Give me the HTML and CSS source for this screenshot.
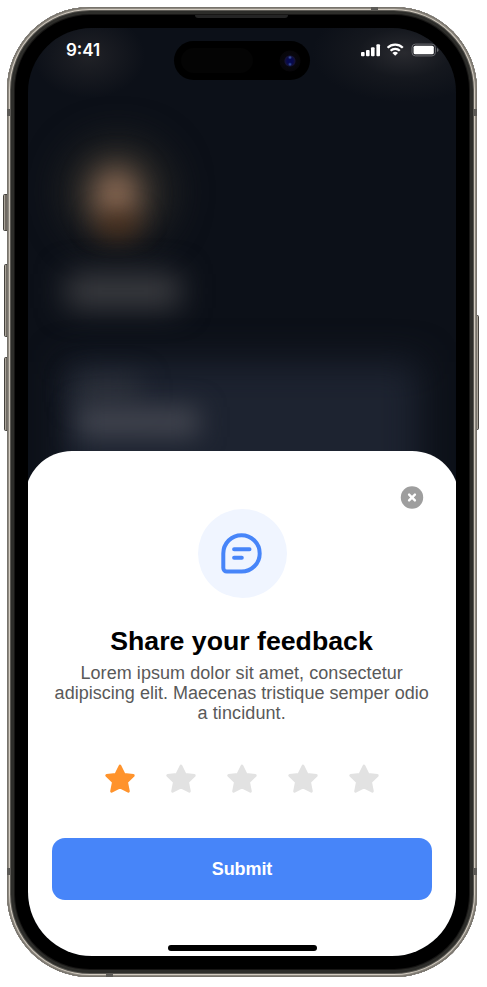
FILE: index.html
```html
<!DOCTYPE html>
<html lang="en">
<head>
<meta charset="utf-8">
<title>Share your feedback</title>
<link rel="stylesheet" href="styles.css">
</head>
<body>
<div class="phone">
  <i class="key key-action"></i><i class="key key-up"></i><i class="key key-down"></i><i class="key key-power"></i>
  <div class="frame">
    <i class="band band-tl"></i><i class="band band-tr"></i><i class="band band-bl"></i><i class="band band-br"></i><i class="band-h band-top"></i><i class="band-h band-bottom"></i>
    <i class="speaker"></i>
    <div class="screen">
      <div class="backdrop">
        <i class="glow glow-time"></i><i class="glow glow-icons"></i><i class="blur halo"></i><i class="blur face"></i><i class="blur chin"></i><i class="blur name"></i>
        <i class="blur card"></i><i class="blur label"></i><i class="blur amount"></i>
      </div>
      <header class="status">
        <span class="time">9:41</span>
        <div class="island"><i class="sensor"></i><i class="camera"></i></div>
        <svg class="indicators" width="80" height="14" viewBox="0 0 80 14">
          <g fill="#fff">
            <rect x="1" y="9" width="3.6" height="4.2" rx="1"/>
            <rect x="6" y="7" width="3.6" height="6.2" rx="1"/>
            <rect x="11" y="4.2" width="3.6" height="9" rx="1"/>
            <rect x="16.4" y="1.3" width="3.6" height="11.9" rx="1"/>
          </g>
          <g fill="none" stroke="#fff" stroke-width="2.3">
            <path d="M27.6 4.7a10.8 10.8 0 0 1 15.2 0"/>
            <path d="M30.6 7.7a6.6 6.6 0 0 1 9.2 0"/>
          </g>
          <path d="M32.4 9.9a4.2 4.2 0 0 1 5.6 0l-2.8 2.8z" fill="#fff"/>
          <rect x="52" y="1.1" width="23.4" height="11.8" rx="3.4" fill="none" stroke="#6b6c71"/>
          <rect x="53.6" y="2.7" width="20.2" height="8.6" rx="1.6" fill="#fff"/>
          <path d="M77 5v4q1.6-.6 1.600-2t-1.600-2z" fill="#6b6c71"/>
        </svg>
      </header>
      <main class="sheet">
        <div class="sheet-top">
          <svg class="close" width="24" height="24" viewBox="0 0 24 24"><circle cx="12" cy="11.500" r="11.200" fill="#9e9e9e"/><path d="M9.100 8.600l5.800 5.800M14.900 8.600l-5.800 5.800" stroke="#fff" stroke-width="2.400" stroke-linecap="round"/></svg>
        </div>
        <div class="badge">
          <svg width="44" height="44" viewBox="0 0 44 44" fill="none" stroke="#4785f9" stroke-width="4" stroke-linecap="round" stroke-linejoin="round"><path d="M21.500 3.200a18.200 18.200 0 0 1 0 36.400H6.900a3.600 3.600 0 0 1-3.600-3.600V21.400A18.200 18.200 0 0 1 21.500 3.200z"/><path d="M14.100 17.200h15.400M14.100 25.700h7.700"/></svg>
        </div>
        <h1>Share your feedback</h1>
        <p class="copy"><span class="l1">Lorem ipsum dolor sit amet, consectetur</span><span class="l2">adipiscing elit. Maecenas tristique semper odio</span><span class="l3">a tincidunt.</span></p>
        <svg class="defs" width="0" height="0"><symbol id="star" viewBox="0 0 32 32"><path d="M16 3L20.100 11.400 29.300 12.500 22.600 18.900 24.400 28.300 16 24 7.600 28.300 9.400 18.900 2.700 12.500 11.900 11.400z" fill="currentColor" stroke="currentColor" stroke-width="2.800" stroke-linejoin="round"/></symbol></svg>
        <div class="stars">
          <svg class="on"><use href="#star"/></svg><svg><use href="#star"/></svg><svg><use href="#star"/></svg><svg><use href="#star"/></svg><svg><use href="#star"/></svg>
        </div>
        <button class="submit">Submit</button>
        <div class="home"></div>
      </main>
    </div>
  </div>
</div>
</body>
</html>
```
FILE: styles.css
```css
* { box-sizing: border-box; }
body { margin: 0; padding: 7px; background: #fff; font-family: "Liberation Sans", Arial, sans-serif; overflow: hidden; }
i { display: block; position: absolute; }
.phone { position: relative; width: 470px; height: 970px; }
.frame {
  position: relative; width: 470px; height: 970px; padding: 21px; border-radius: 83px; background: #000;
  box-shadow: inset 0 0 0 1px #77736c, inset 0 0 0 2px #8f8a81, inset 0 0 0 3px #d2cbc0, inset 0 0 0 4px #5b5954, inset 0 0 0 7px #2d2d2a, inset 0 0 0 8px #171615;
}
.screen { position: relative; width: 428px; height: 928px; border-radius: 64px; overflow: hidden; background: #0c1018; display: flex; flex-direction: column; }
.key { width: 5px; background: linear-gradient(90deg, #45423d 0 1px, #aaa499 1px 2px, #706a63 2px 4px, #171513 4px); border: solid #494641; border-width: 1px 0; border-radius: 2px 0 0 2px; }
.key-action { left: -4px; top: 187px; height: 37px; }
.key-up { left: -3px; top: 257px; height: 73px; }
.key-down { left: -3px; top: 350px; height: 74px; }
.key-power { right: -2px; top: 308px; height: 115px; transform: scaleX(-1); }
.band { width: 4px; height: 7px; background: #5c5a56; }
.band-tl { left: 0; top: 102px; }
.band-tr { right: 0; top: 102px; }
.band-bl { left: 0; top: 861px; }
.band-br { right: 0; top: 861px; }
.band-h { width: 7px; height: 4px; background: #5c5a56; }
.band-top { left: 364px; top: 0; }
.band-bottom { left: 99px; bottom: 0; }
.speaker { left: 188px; top: 8px; width: 93px; height: 3px; background: #242424; border-radius: 0 0 3px 3px; }
.backdrop { position: absolute; inset: 0; }
.glow { border-radius: 50%; }
.glow-time { left: 5px; top: -14px; width: 112px; height: 84px; background: radial-gradient(closest-side, #202126, #0c101800); }
.glow-icons { left: 284px; top: -24px; width: 184px; height: 98px; background: radial-gradient(closest-side, #292a2f, #1c1e2388 50%, #0c101800); }
.blur { filter: blur(18px); }
.halo { left: 34px; top: 110px; width: 112px; height: 108px; border-radius: 50%; background: #242423; }
.face { left: 64px; top: 139px; width: 48px; height: 58px; border-radius: 50%; background: #8b6a54; filter: blur(15px); }
.chin { left: 68px; top: 188px; width: 44px; height: 18px; border-radius: 50%; background: #41230e; filter: blur(13px); }
.name { left: 38px; top: 246px; width: 114px; height: 34px; background: #3d3e42; filter: blur(15px); }
.card { left: 36px; top: 334px; width: 355px; height: 190px; background: #1d2330; }
.label { left: 47px; top: 350px; width: 65px; height: 25px; background: #2f333c; filter: blur(14px); }
.amount { left: 49px; top: 379px; width: 122px; height: 30px; background: #42454f; filter: blur(13px); }
.status { position: relative; height: 423px; flex: none; display: flex; align-items: flex-start; }
.time { width: 146px; padding: 12px 0 0 38px; color: #fff; font: 600 17px/20px Inter, sans-serif; }
.island { flex: none; width: 136px; height: 39px; margin-top: 13px; border-radius: 20px; background: #000; display: flex; align-items: center; justify-content: space-between; padding: 0 9px 0 7px; }
.sensor { position: static; width: 72px; height: 25px; border-radius: 13px; background: #040404; }
.camera { position: static; width: 22px; height: 22px; border-radius: 50%; background: radial-gradient(circle at 50% 34%, #3d5cae 0, transparent 2px), radial-gradient(circle at 50% 65%, #3457b0 0, transparent 2px), radial-gradient(circle, #07094e 0 3px, #151237 5px, #08070e 6px, #070609 10px, #000 11px); }
.indicators { margin: 15px 0 0 50px; flex: none; }
.sheet { position: relative; flex: 1; margin: 0 -3px; padding: 0 27px; border-radius: 47px 47px 0 0; background: #fff; display: flex; flex-direction: column; align-items: center; }
.sheet-top { width: 100%; height: 58px; padding: 35px 8px 0 0; display: flex; justify-content: flex-end; }
.close { flex: none; }
.badge { width: 89px; height: 89px; flex: none; border-radius: 50%; background: #f0f5ff; display: flex; align-items: center; justify-content: center; }
h1 { margin: 26px 0 0; font-size: 26.700px; line-height: 34px; color: #000; white-space: nowrap; transform: translateX(-.5px); }
.copy { margin: 5px 0 0; font-size: 18px; line-height: 20px; color: #595959; display: flex; flex-direction: column; align-items: center; white-space: nowrap; transform: translateX(-.3px); }
.l1 { letter-spacing: .06px; }
.l2 { letter-spacing: .02px; }
.l3 { letter-spacing: .1px; }
.defs { position: absolute; }
.stars { display: flex; gap: 29.200px; margin-top: 40px; height: 32px; color: #e2e2e2; }
.stars svg { width: 32px; height: 32px; }
.stars .on { color: #ff932c; }
.submit { width: 380px; height: 62px; flex: none; margin-top: 43px; border: 0; border-radius: 13px; background: #4785f9; color: #fff; font: bold 18px/22px "Liberation Sans", Arial, sans-serif; letter-spacing: -.1px; }
.home { width: 149px; height: 6px; margin-top: 45px; border-radius: 3px; background: #000; }
```
